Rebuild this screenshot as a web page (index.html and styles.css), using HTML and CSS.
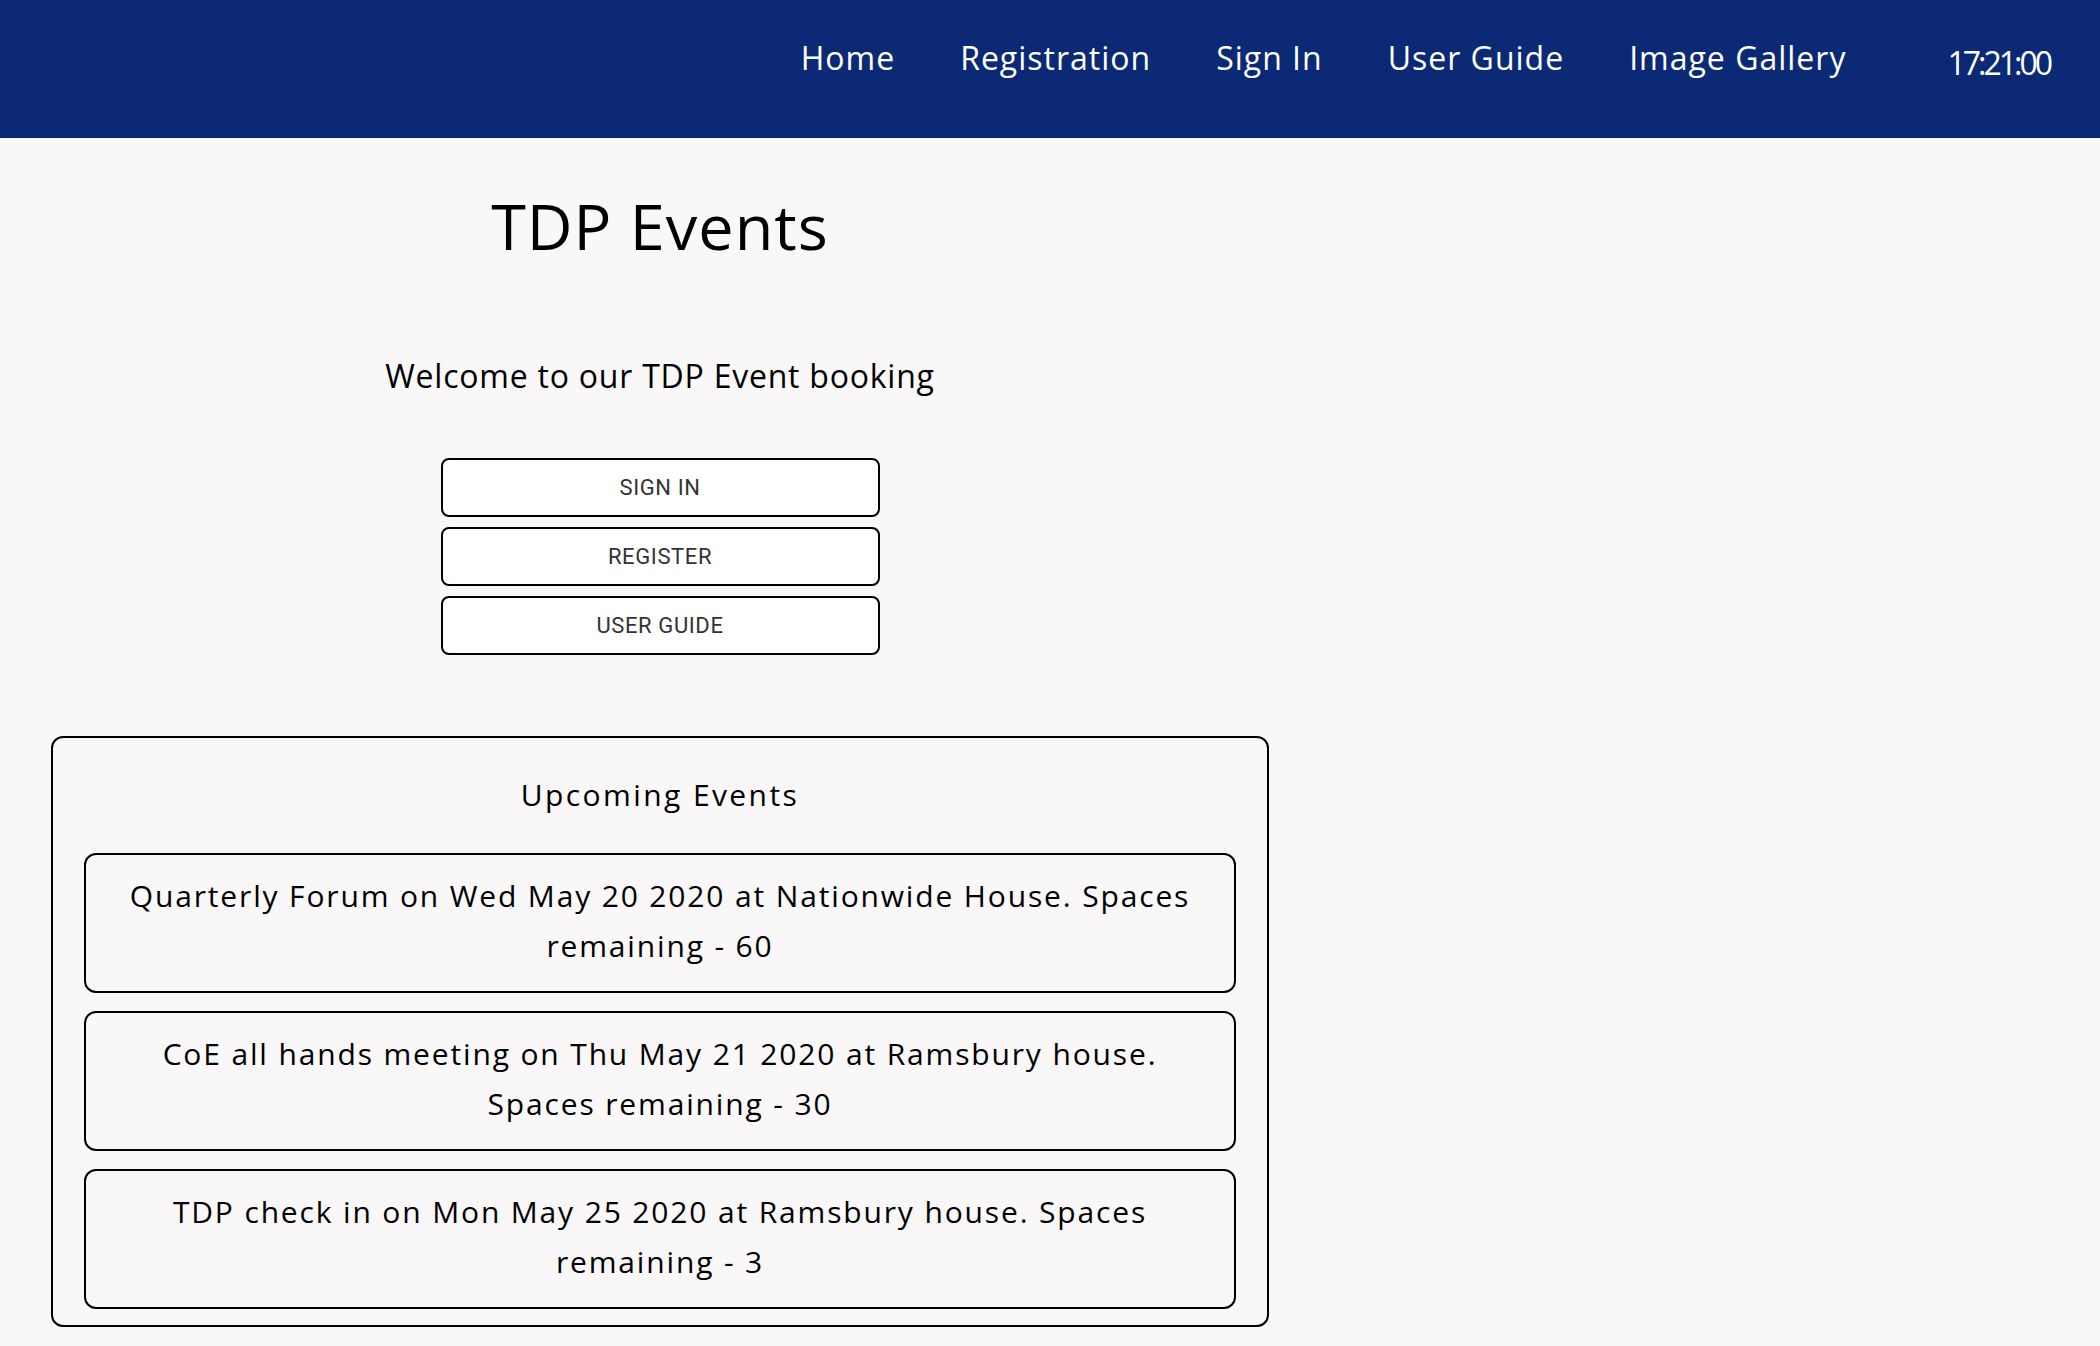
FILE: index.html
```html
<!DOCTYPE html>
<html lang="en">
<head>
<meta charset="utf-8">
<title>TDP Events</title>
<link rel="stylesheet" href="styles.css">
</head>
<body>
<header class="topbar">
  <nav class="nav">
    <a class="nav-link" href="#">Home</a>
    <a class="nav-link" href="#">Registration</a>
    <a class="nav-link" href="#">Sign In</a>
    <a class="nav-link" href="#">User Guide</a>
    <a class="nav-link" href="#">Image Gallery</a>
  </nav>
  <div class="clock">17:21:00</div>
</header>
<main class="content">
  <h1 class="title">TDP Events</h1>
  <p class="welcome">Welcome to our TDP Event booking</p>
  <div class="actions">
    <button class="btn">Sign In</button>
    <button class="btn">Register</button>
    <button class="btn">User Guide</button>
  </div>
  <section class="events">
    <h2 class="events-title">Upcoming Events</h2>
    <div class="event">Quarterly Forum on Wed May 20 2020 at Nationwide House. Spaces<br>remaining - 60</div>
    <div class="event">CoE all hands meeting on Thu May 21 2020 at Ramsbury house.<br>Spaces remaining - 30</div>
    <div class="event">TDP check in on Mon May 25 2020 at Ramsbury house. Spaces<br>remaining - 3</div>
  </section>
</main>
</body>
</html>
```
FILE: styles.css
```css
* { box-sizing: border-box; }
html, body {
  margin: 0;
  background: #f9f7f8;
  font-family: "Open Sans", "Liberation Sans", sans-serif;
  color: #000;
}
.topbar {
  height: 138px;
  background: #0c2975;
  display: flex;
  justify-content: flex-end;
  align-items: flex-start;
  padding: 42px 50px 0 0;
}
.nav {
  display: flex;
  gap: 65px;
}
.nav-link {
  color: #fff;
  text-decoration: none;
  font-size: 32px;
  line-height: 32px;
  letter-spacing: 1px;
}
.clock {
  color: #fff;
  font-size: 32px;
  line-height: 32px;
  letter-spacing: -3px;
  margin: 5px 0 0 101px;
}
.content {
  width: 1320px;
  text-align: center;
  padding-bottom: 19px;
}
.title {
  margin: 56px 0 0;
  font-size: 63px;
  line-height: 63px;
  font-weight: 400;
  letter-spacing: 1px;
}
.welcome {
  margin: 103px 0 0;
  font-size: 32px;
  line-height: 32px;
  letter-spacing: 0.77px;
}
.actions {
  margin: 66px auto 0;
  width: 439px;
  display: flex;
  flex-direction: column;
  gap: 10px;
}
.btn {
  height: 59px;
  background: #fff;
  border: 2px solid #000;
  border-radius: 8px;
  font-family: Roboto, "Liberation Sans", sans-serif;
  font-size: 22px;
  letter-spacing: 0.6px;
  text-transform: uppercase;
  color: #333;
  padding: 0;
}
.events {
  margin: 81px 51px 0;
  border: 2px solid #000;
  border-radius: 12px;
  padding: 42px 31px 16px;
  display: flex;
  flex-direction: column;
  gap: 18px;
}
.events-title {
  margin: 0 0 26px;
  font-size: 30px;
  line-height: 29px;
  font-weight: 400;
  letter-spacing: 2.4px;
}
.event {
  height: 140px;
  border: 2px solid #000;
  border-radius: 12px;
  padding: 16px 0 0;
  font-size: 30px;
  line-height: 50px;
  letter-spacing: 1.85px;
}
```
